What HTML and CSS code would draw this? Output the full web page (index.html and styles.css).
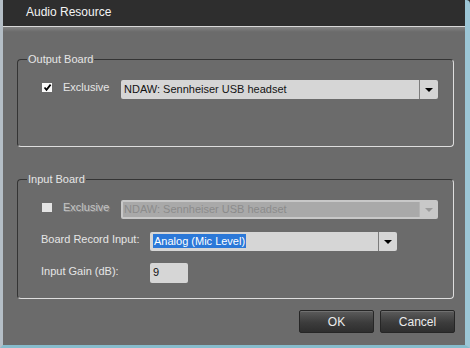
FILE: index.html
```html
<!DOCTYPE html>
<html lang="en">
<head>
  <meta charset="UTF-8" />
  <title>Audio Resource</title>
  <link rel="stylesheet" href="styles.css">
</head>
<body>
  <div class="window">
    <div class="titlebar">Audio Resource</div>
    <div class="client">

      <div class="group group-output">
        <span class="legend">Output Board</span>
        <div class="row">
          <label class="check">
            <span class="box">
              <svg width="9" height="9" viewBox="0 0 9 9"><path d="M1.5 4.5 L3.5 6.8 L7.6 1.6" fill="none" stroke="#000" stroke-width="1.8"/></svg>
            </span>
            Exclusive
          </label>
          <div class="combo combo-wide">
            <span class="combo-text">NDAW: Sennheiser USB headset</span>
            <span class="combo-btn"><i class="arrow"></i></span>
          </div>
        </div>
      </div>

      <div class="group group-input">
        <span class="legend">Input Board</span>
        <div class="row">
          <label class="check disabled">
            <span class="box"></span>
            Exclusive
          </label>
          <div class="combo combo-wide combo-disabled">
            <span class="combo-text">NDAW: Sennheiser USB headset</span>
            <span class="combo-btn"><i class="arrow"></i></span>
          </div>
        </div>
        <div class="row row-field">
          <span class="field-label">Board Record Input:</span>
          <div class="combo combo-mid">
            <span class="combo-text"><span class="selected">Analog (Mic Level)</span></span>
            <span class="combo-btn"><i class="arrow"></i></span>
          </div>
        </div>
        <div class="row row-field">
          <span class="field-label">Input Gain (dB):</span>
          <div class="textbox">9</div>
        </div>
      </div>

      <div class="buttons">
        <button>OK</button>
        <button>Cancel</button>
      </div>

    </div>
  </div>
</body>
</html>
```

FILE: styles.css
```css
* {
  margin: 0;
  padding: 0;
  box-sizing: border-box;
}
body {
  font-family: 'Liberation Sans', Arial, sans-serif;
  font-size: 11px;
  background: #2b2b2b;
}
.window {
  width: 470px;
  height: 348px;
  background: #6b6b6b;
  border-left: 3px solid #b4bec6;
  border-right: 5px solid #9cc6d6;
  border-bottom: 3px solid #86bccc;
  border-top-right-radius: 4px;
  display: flex;
  flex-direction: column;
}
.titlebar {
  height: 27px;
  background: #2e2e2e;
  border-bottom: 1px solid #d8d8d8;
  color: #f4f4f4;
  font-size: 12px;
  padding: 5px 0 0 23px;
}
.client {
  flex: 1;
  background: linear-gradient(#828282 0, #6b6b6b 5px);
  padding: 32px 11px 0 14px;
}
.group {
  position: relative;
  border: 1px solid;
  border-color: #343434 #dedede #dedede #343434;
  border-radius: 4px;
  padding: 19px 0 0 23px;
}
.group-output {
  height: 88px;
}
.group-input {
  height: 120px;
  margin-top: 32px;
}
.legend {
  position: absolute;
  top: -8px;
  left: 9px;
  padding: 0 1px;
  background: #6b6b6b;
  color: #e6e6e6;
  line-height: 14px;
}
.row {
  display: flex;
  align-items: center;
  height: 20px;
}
.row-field {
  margin-top: 12px;
}
.check {
  display: flex;
  align-items: center;
  width: 80px;
  color: #e6e6e6;
  padding-left: 1px;
  margin-bottom: 4px;
}
.check .box {
  width: 10px;
  height: 9px;
  background: #fafafa;
  margin-right: 11px;
  display: flex;
  align-items: center;
  justify-content: center;
}
.check.disabled {
  color: #c4c4c4;
  text-shadow: 1px 1px 0 #8a8a8a;
}
.check.disabled .box {
  background: #e4e4e4;
}
.field-label {
  width: 109px;
  color: #e6e6e6;
  margin-bottom: 5px;
}
.combo {
  display: flex;
  height: 19px;
  background: #d6d6d6;
  border-radius: 2px;
  color: #111;
}
.combo-wide {
  width: 317px;
}
.combo-mid {
  width: 247px;
  height: 19px;
}
.combo-text {
  flex: 1;
  display: flex;
  align-items: center;
  padding-left: 3px;
}
.combo-btn {
  width: 19px;
  border-left: 1px solid #7c7c7c;
  display: flex;
  align-items: center;
  justify-content: center;
}
.arrow {
  width: 0;
  height: 0;
  border-left: 4px solid transparent;
  border-right: 4px solid transparent;
  border-top: 4px solid #000;
  margin-top: 2px;
}
.combo-disabled {
  background: #c8c8c8;
  padding: 2px 0 2px 2px;
  color: #8c8c8c;
}
.combo-disabled .combo-text {
  background: #a9a9a9;
  padding-left: 1px;
}
.combo-disabled .combo-btn {
  border-left: 1px solid #b4b4b4;
}
.combo-disabled .arrow {
  border-top-color: #9c9c9c;
}
.selected {
  background: #2b78d8;
  color: #fff;
  padding: 1px 1px;
}
.textbox {
  width: 38px;
  height: 20px;
  background: #d6d6d6;
  border-radius: 2px;
  color: #111;
  padding: 3px 0 0 3px;
}
.buttons {
  display: flex;
  justify-content: flex-end;
  gap: 6px;
  margin-top: 11px;
  margin-right: -1px;
}
button {
  width: 75px;
  height: 23px;
  font-family: 'Liberation Sans', Arial, sans-serif;
  font-size: 12px;
  color: #ececec;
  background: linear-gradient(#5c5c5c, #3c3c3c 55%, #2e2e2e);
  border: 1px solid #262626;
  border-radius: 2px;
  box-shadow: inset 0 1px 0 #707070;
}
```
